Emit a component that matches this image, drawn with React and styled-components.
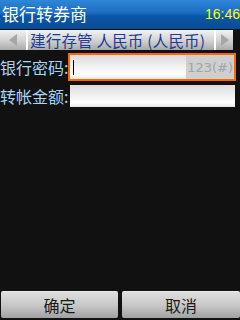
import styled, { createGlobalStyle } from "styled-components";

const GlobalStyle = createGlobalStyle`
  html, body {
    margin: 0;
    padding: 0;
    background: #111111;
  }
  * { box-sizing: border-box; }
`;

const FONT = `"Noto Sans CJK SC", "Liberation Sans", sans-serif`;

const Screen = styled.div`
  width: 240px;
  height: 320px;
  background: #111111;
  display: flex;
  flex-direction: column;
  font-family: ${FONT};
  overflow: hidden;
`;

const TitleBar = styled.div`
  height: 29px;
  display: flex;
  align-items: center;
  justify-content: space-between;
  padding: 0 0 0 2px;
  background: linear-gradient(#2f86d8 0%, #1a6cc0 45%, #0c56a6 55%, #0a4c96 100%);
`;

const Title = styled.span`
  color: #ffffff;
  font-size: 17px;
  line-height: 1;
  margin-top: -2px;
`;

const Clock = styled.span`
  color: #ffff00;
  font-family: "Liberation Sans", sans-serif;
  font-size: 14px;
  line-height: 1;
  margin-top: -2px;
`;

const TabBar = styled.div`
  margin-top: 1px;
  width: 233px;
  height: 20px;
  display: flex;
  align-items: stretch;
  background: linear-gradient(#f2f2f2 0%, #d4d4d4 50%, #a9a9a9 100%);
`;

const ArrowCell = styled.div`
  flex: 0 0 ${(p) => p.$w}px;
  display: flex;
  align-items: center;
  justify-content: center;
  border-${(p) => (p.$side === "left" ? "right" : "left")}: 2px solid #ffffff;
`;

const TabText = styled.div`
  flex: 1;
  min-width: 0;
  color: #1c3c96;
  font-size: 15.5px;
  letter-spacing: 0.2px;
  line-height: 20px;
  white-space: nowrap;
  padding-left: 2px;
`;

const Form = styled.div`
  display: flex;
  flex-direction: column;
  padding-top: 3px;
`;

const Row = styled.div`
  display: flex;
  align-items: center;
  height: ${(p) => p.$h}px;
  margin-bottom: ${(p) => p.$mb || 0}px;
`;

const Label = styled.span`
  width: ${(p) => p.$w}px;
  color: #a8d6f6;
  font-size: 16px;
  line-height: 1;
  white-space: nowrap;
`;

const InputBox = styled.div`
  display: flex;
  align-items: stretch;
  width: ${(p) => p.$w}px;
  height: 100%;
  border: ${(p) => (p.$focus ? "2px solid #ff6600" : "none")};
  background: linear-gradient(#dcdcdc 0%, #f4f4f4 55%, #ffffff 80%, #e6e6e6 100%);
`;

const InputField = styled.div`
  flex: 1;
  display: flex;
  align-items: center;
  padding-left: 3px;
`;

const Caret = styled.div`
  width: 1px;
  height: 15px;
  background: #000000;
`;

const Hint = styled.div`
  width: 48px;
  display: flex;
  align-items: center;
  justify-content: flex-end;
  padding-right: 1px;
  background: #cfcfcf;
  color: #a4a4a4;
  font-family: "DejaVu Sans", sans-serif;
  font-size: 13px;
`;

const Spacer = styled.div`
  flex: 1;
`;

const ButtonBar = styled.div`
  display: flex;
  gap: 4px;
  padding: 0 0 2px 1px;
`;

const Button = styled.div`
  flex: ${(p) => p.$w}px 0 0;
  width: ${(p) => p.$w}px;
  height: 27px;
  display: flex;
  align-items: center;
  justify-content: center;
  border-radius: 2px;
  border-top: 1px solid #e8e8e8;
  background: linear-gradient(#dedede 0%, #c8c8c8 50%, #a2a2a2 100%);
  color: #1a1a1a;
  font-size: 16px;
`;

const Arrow = ({ dir }) => (
  <svg width="8" height="12" viewBox="0 0 8 12">
    {dir === "left" ? (
      <polygon points="8,0 8,12 0,6" fill="#a6a6a6" />
    ) : (
      <polygon points="0,0 0,12 8,6" fill="#a6a6a6" />
    )}
  </svg>
);

export default function App() {
  return (
    <Screen>
      <GlobalStyle />
      <TitleBar>
        <Title>银行转券商</Title>
        <Clock>16:46</Clock>
      </TitleBar>
      <TabBar>
        <ArrowCell $w={28} $side="left">
          <Arrow dir="left" />
        </ArrowCell>
        <TabText>建行存管 人民币 (人民币)</TabText>
        <ArrowCell $w={19} $side="right">
          <Arrow dir="right" />
        </ArrowCell>
      </TabBar>
      <Form>
        <Row $h={28} $mb={4}>
          <Label $w={68}>银行密码:</Label>
          <InputBox $w={168} $focus>
            <InputField>
              <Caret />
            </InputField>
            <Hint>123(#)</Hint>
          </InputBox>
        </Row>
        <Row $h={22}>
          <Label $w={70}>转帐金额:</Label>
          <InputBox $w={165} />
        </Row>
      </Form>
      <Spacer />
      <ButtonBar>
        <Button $w={117}>确定</Button>
        <Button $w={118}>取消</Button>
      </ButtonBar>
    </Screen>
  );
}
